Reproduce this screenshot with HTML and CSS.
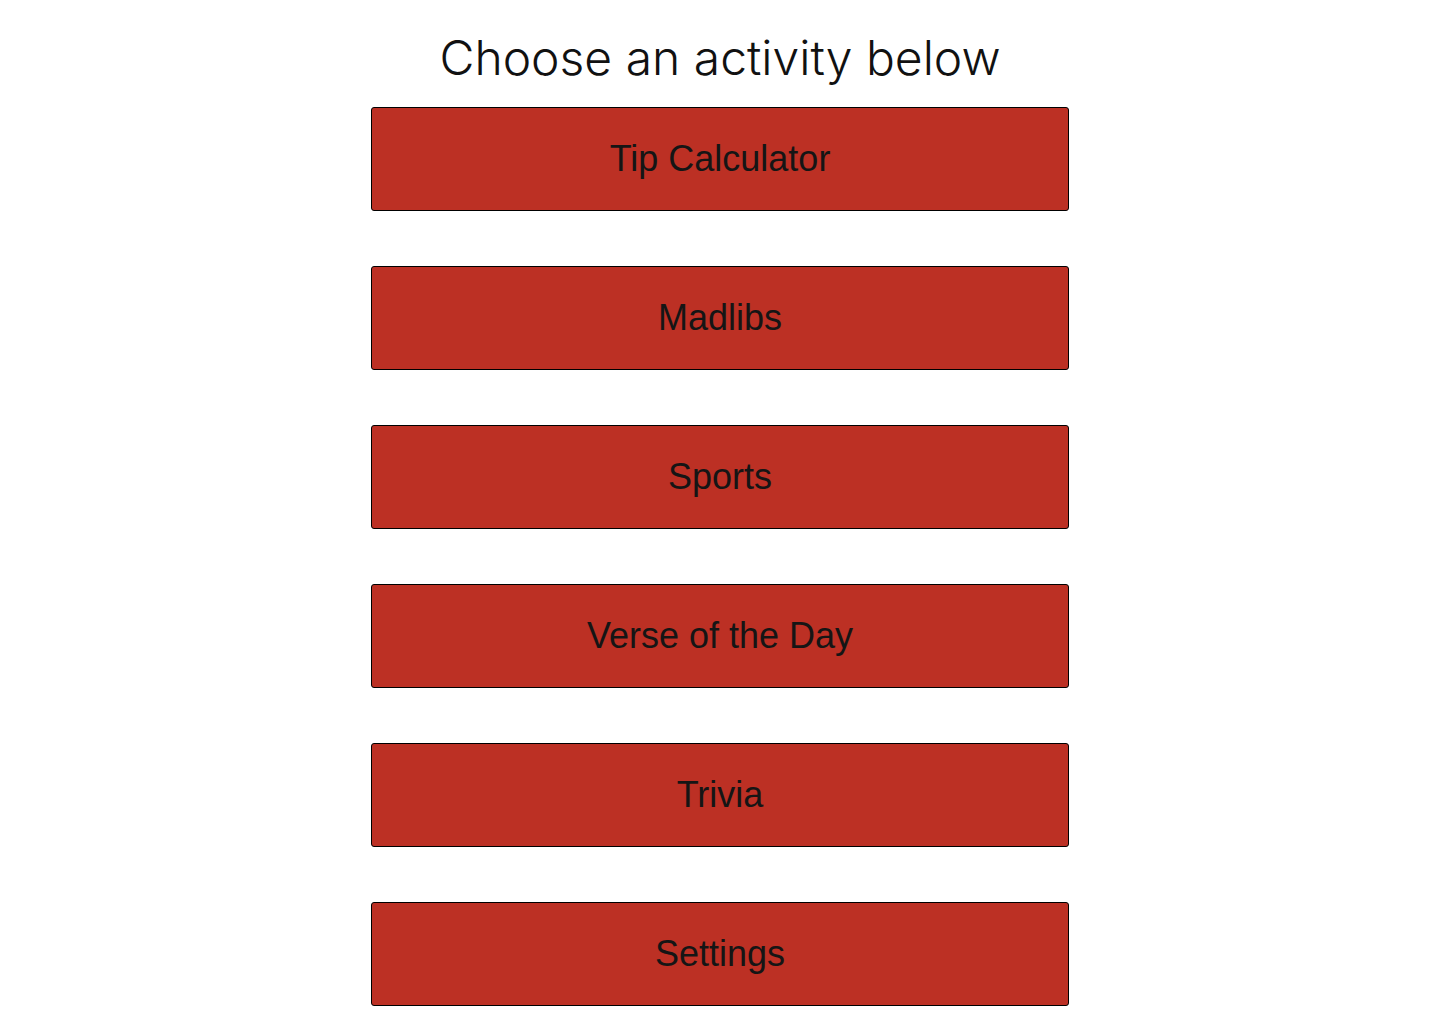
FILE: index.html
```html
<!DOCTYPE html>
<html>
<head>
<meta charset="utf-8">
<link rel="stylesheet" href="styles.css">
</head>
<body>
<main class="page">
  <h1 class="title">Choose an activity below</h1>
  <nav class="menu">
    <button class="activity">Tip Calculator</button>
    <button class="activity">Madlibs</button>
    <button class="activity">Sports</button>
    <button class="activity">Verse of the Day</button>
    <button class="activity">Trivia</button>
    <button class="activity">Settings</button>
  </nav>
</main>
</body>
</html>
```
FILE: styles.css
```css
html, body {
  margin: 0;
  padding: 0;
  background: #ffffff;
}
.page {
  display: flex;
  flex-direction: column;
  align-items: center;
  padding-top: 27px;
}
.title {
  margin: 0;
  font-family: Inter, "Noto Sans", sans-serif;
  font-weight: 350;
  font-size: 48px;
  line-height: 62px;
  color: #111111;
  margin-bottom: 18px;
}
.menu {
  display: flex;
  flex-direction: column;
  gap: 55px;
}
.activity {
  width: 698px;
  height: 104px;
  background: #bc3024;
  border: 1px solid #000000;
  border-radius: 3px;
  font-family: "Liberation Sans", Arial, sans-serif;
  font-size: 36px;
  color: #151515;
  padding: 0;
  cursor: pointer;
}
```
